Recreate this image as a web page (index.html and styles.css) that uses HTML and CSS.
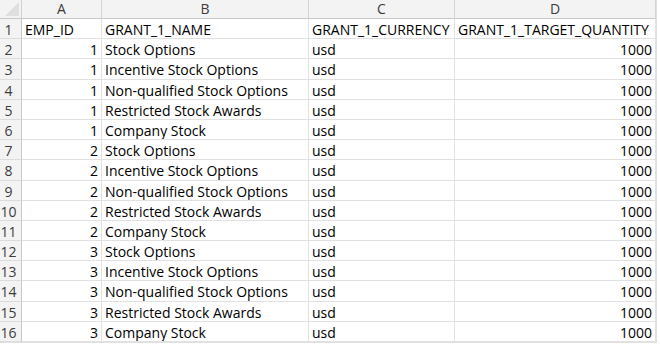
FILE: index.html
```html
<!DOCTYPE html>
<html>
<head>
<meta charset="utf-8">
<link rel="stylesheet" href="styles.css">
</head>
<body>
<div class="sheet">
  <div class="corner"><span class="tri"></span></div>
  <div class="colhdr">A</div>
  <div class="colhdr">B</div>
  <div class="colhdr">C</div>
  <div class="colhdr">D</div>

  <div class="rowhdr">1</div>
  <div class="cell">EMP_ID</div>
  <div class="cell">GRANT_1_NAME</div>
  <div class="cell">GRANT_1_CURRENCY</div>
  <div class="cell">GRANT_1_TARGET_QUANTITY</div>

  <div class="rowhdr">2</div><div class="cell num">1</div><div class="cell">Stock Options</div><div class="cell">usd</div><div class="cell num">1000</div>
  <div class="rowhdr">3</div><div class="cell num">1</div><div class="cell">Incentive Stock Options</div><div class="cell">usd</div><div class="cell num">1000</div>
  <div class="rowhdr">4</div><div class="cell num">1</div><div class="cell">Non-qualified Stock Options</div><div class="cell">usd</div><div class="cell num">1000</div>
  <div class="rowhdr">5</div><div class="cell num">1</div><div class="cell">Restricted Stock Awards</div><div class="cell">usd</div><div class="cell num">1000</div>
  <div class="rowhdr">6</div><div class="cell num">1</div><div class="cell">Company Stock</div><div class="cell">usd</div><div class="cell num">1000</div>
  <div class="rowhdr">7</div><div class="cell num">2</div><div class="cell">Stock Options</div><div class="cell">usd</div><div class="cell num">1000</div>
  <div class="rowhdr">8</div><div class="cell num">2</div><div class="cell">Incentive Stock Options</div><div class="cell">usd</div><div class="cell num">1000</div>
  <div class="rowhdr">9</div><div class="cell num">2</div><div class="cell">Non-qualified Stock Options</div><div class="cell">usd</div><div class="cell num">1000</div>
  <div class="rowhdr">10</div><div class="cell num">2</div><div class="cell">Restricted Stock Awards</div><div class="cell">usd</div><div class="cell num">1000</div>
  <div class="rowhdr">11</div><div class="cell num">2</div><div class="cell">Company Stock</div><div class="cell">usd</div><div class="cell num">1000</div>
  <div class="rowhdr">12</div><div class="cell num">3</div><div class="cell">Stock Options</div><div class="cell">usd</div><div class="cell num">1000</div>
  <div class="rowhdr">13</div><div class="cell num">3</div><div class="cell">Incentive Stock Options</div><div class="cell">usd</div><div class="cell num">1000</div>
  <div class="rowhdr">14</div><div class="cell num">3</div><div class="cell">Non-qualified Stock Options</div><div class="cell">usd</div><div class="cell num">1000</div>
  <div class="rowhdr">15</div><div class="cell num">3</div><div class="cell">Restricted Stock Awards</div><div class="cell">usd</div><div class="cell num">1000</div>
  <div class="rowhdr">16</div><div class="cell num">3</div><div class="cell">Company Stock</div><div class="cell">usd</div><div class="cell num">1000</div>
</div>
</body>
</html>
```

FILE: styles.css
```css
html, body {
  margin: 0;
  padding: 0;
  background: #ffffff;
}
.sheet {
  display: grid;
  grid-template-columns: 22px 80px 207px 146px 201px;
  grid-template-rows: 19px repeat(16, 20.2px);
  font-family: "Open Sans", "Liberation Sans", sans-serif;
  font-size: 14px;
  color: #000;
  width: 656px;
  border-right: 1px solid #e0e0e0;
  border-bottom: 1px solid #e0e0e0;
}
.corner {
  background: #f3f3f3;
  border-right: 1px solid #d0d0d0;
  border-bottom: 1px solid #c8c8c8;
  position: relative;
  overflow: hidden;
}
.tri {
  position: absolute;
  right: 2px;
  bottom: 2px;
  width: 0;
  height: 0;
  border-left: 14px solid transparent;
  border-bottom: 14px solid #dfdfdf;
}
.colhdr {
  background: #f3f3f3;
  color: #3c3c3c;
  text-align: center;
  line-height: 18px;
  border-right: 1px solid #d4d4d4;
  border-bottom: 1px solid #c8c8c8;
}
.rowhdr {
  background: #f3f3f3;
  color: #3c3c3c;
  text-align: center;
  padding: 1px 4px 0 0;
  line-height: 19px;
  border-right: 1px solid #c8c8c8;
  border-bottom: 1px solid #dcdcdc;
}
.cell {
  line-height: 19px;
  padding: 1px 3px 0;
  white-space: nowrap;
  overflow: hidden;
  border-right: 1px solid #e1e1e1;
  border-bottom: 1px solid #e1e1e1;
}
.num {
  text-align: right;
}
```
